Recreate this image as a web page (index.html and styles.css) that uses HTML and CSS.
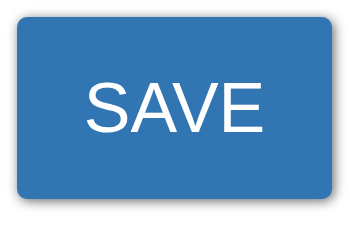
FILE: index.html
```html
<!DOCTYPE html>
<html>
<head>
<meta charset="utf-8">
<link rel="stylesheet" href="styles.css">
</head>
<body>
<div class="stage">
  <button class="save-btn">SAVE</button>
</div>
</body>
</html>
```
FILE: styles.css
```css
html, body {
  margin: 0;
  padding: 0;
  background: #ffffff;
}
.stage {
  width: 350px;
  height: 215px;
  padding: 17px 18px 16px 17px;
  box-sizing: border-box;
  display: flex;
}
.save-btn {
  flex: 1;
  border: none;
  margin: 0;
  padding: 0;
  background: #3176b3;
  border-radius: 10px;
  box-shadow: 2px 2px 12px rgba(0, 0, 0, 0.6);
  color: #ffffff;
  font-family: "Liberation Sans", Arial, sans-serif;
  font-size: 70px;
  line-height: 1;
  display: flex;
  align-items: center;
  justify-content: center;
}
```
